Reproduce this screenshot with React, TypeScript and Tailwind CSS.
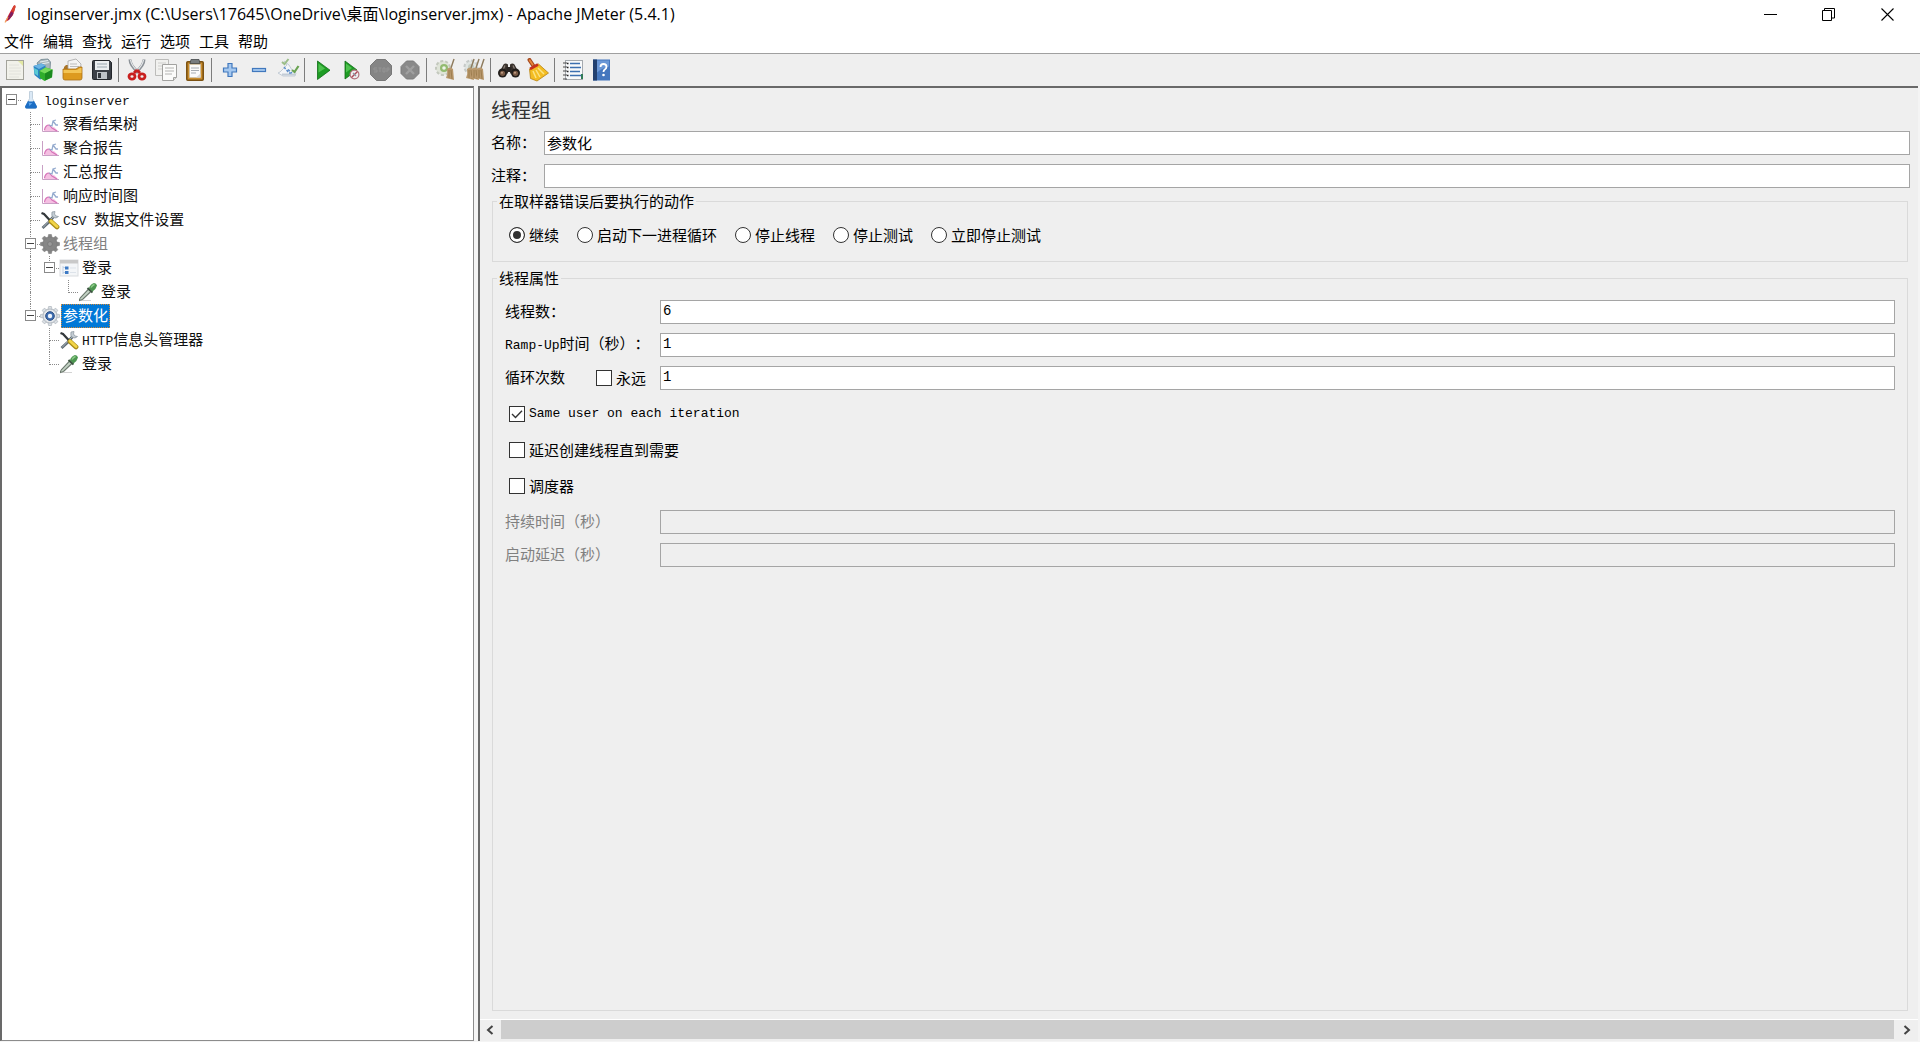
import { useId } from "react";
import type { ReactNode } from "react";

/* ---------- toolbar icons (24 x 24) ---------- */

function Svg({ children, size = 24 }: { children: ReactNode; size?: number }) {
  return (
    <svg width={size} height={size} viewBox={`0 0 ${size} ${size}`} fill="none" aria-hidden="true">
      {children}
    </svg>
  );
}

const NewIcon = () => (
  <Svg>
    <rect x="3.500" y="2.500" width="17" height="19" fill="#f1f1ea" stroke="#a3a39b" />
    <path d="M15 3h5v5z" fill="#e2e8a4" />
    <path d="M6 7h10M6 10h12M6 13h12M6 16h12M6 19h10" stroke="#e2e2dc" />
  </Svg>
);

const TemplatesIcon = () => (
  <Svg>
    <path d="M5 5l4-3.500 7-.5 2.500 3L18 12l-9 3z" fill="#a7b4ba" stroke="#6f858f" strokeWidth=".8" />
    <path d="M8 4l8-1.500M9 6l8-1.500" stroke="#e4ecef" strokeWidth="1.200" />
    <path d="M1.500 8l8-2.500 4 2v12L8 21.500 2.500 17z" fill="#2b82c2" />
    <path d="M1.500 8l8-2.500 4 2L7 11z" fill="#6bb4e4" />
    <path d="M2 10l4 2v6l-3.500-2.500z" fill="#59c9d4" />
    <path d="M7.500 13l6-3.500 7 2-.5 8-7.500 3.500-4.500-3z" fill="#2fae2b" />
    <path d="M7.500 13l6-3.500 7 2-7.500 4z" fill="#75da5a" />
    <path d="M13 15.500v7l7-3.500.5-7.500z" fill="#1b8a1f" />
  </Svg>
);

const OpenIcon = () => (
  <Svg>
    <path d="M3 9l2-2h4l2 2h10v4H3z" fill="#a9752a" />
    <path d="M7 3l8-2 5 5-1 8H7z" fill="#f4f4f4" stroke="#a6a6a6" strokeWidth=".8" />
    <path d="M9 6h7M9 8.500h9" stroke="#bdbdbd" />
    <path d="M2 11h13l3-2h3v11q0 2-2 2H4q-2 0-2-2z" fill="#dd9a1f" stroke="#a8701a" strokeWidth=".8" />
    <path d="M2.500 12H16l3-2h1.500v5h-18z" fill="#f3c455" />
  </Svg>
);

const SaveIcon = () => (
  <Svg>
    <path d="M2.500 3.500q0-1 1-1h16l2 2v16q0 1-1 1h-17q-1 0-1-1z" fill="#3b3f46" stroke="#23262b" />
    <rect x="5" y="3" width="14" height="9" fill="#eceff1" />
    <path d="M7 6h10M7 9h10" stroke="#9aa7b0" />
    <rect x="7" y="14" width="10" height="7" fill="#bfc4c9" />
    <rect x="8" y="15" width="3" height="5" fill="#33373d" />
  </Svg>
);

const CutIcon = () => (
  <Svg>
    <path d="M5 1.500q0 6 8.500 13" stroke="#8c9298" strokeWidth="3" />
    <path d="M5.500 2q1 6 8 12" stroke="#e7eaec" strokeWidth="1.200" />
    <path d="M19 1.500q0 6-8.500 13" stroke="#8c9298" strokeWidth="3" />
    <path d="M18.500 2q-1 6-8 12" stroke="#e7eaec" strokeWidth="1.200" />
    <path d="M12 12l-3 3M12 12l3 3" stroke="#c9201f" strokeWidth="3" />
    <ellipse cx="7" cy="18.500" rx="3" ry="2.600" stroke="#c9201f" strokeWidth="2.800" />
    <ellipse cx="17" cy="18.500" rx="3" ry="2.600" stroke="#c9201f" strokeWidth="2.800" />
  </Svg>
);

const CopyIcon = () => (
  <Svg>
    <path d="M1.500 1.500h13v16h-13z" fill="#f1f1ef" stroke="#bcbcba" />
    <path d="M4 5h8M4 8h8M4 11h5" stroke="#cfcfcd" />
    <path d="M8.500 6.500h14v13l-3 3h-11z" fill="#fbfbfa" stroke="#a2a2a0" />
    <path d="M11 10h9M11 13h9M11 16h7" stroke="#b4b4b2" />
    <path d="M19.500 22.500v-3h3" fill="#dcdcda" stroke="#a2a2a0" />
  </Svg>
);

const PasteIcon = () => (
  <Svg>
    <rect x="3.800" y="3.800" width="16.400" height="18.400" rx="1" fill="#c98d2e" stroke="#7c5212" strokeWidth="1.600" />
    <rect x="6.500" y="6.500" width="11" height="13" fill="#fafafa" stroke="#c9c3b6" strokeWidth=".6" />
    <path d="M8 1.500h8l1 4H7z" fill="#777c7f" stroke="#45494b" strokeWidth=".8" />
    <path d="M8 10h8M8 12.500h8M8 15h5" stroke="#a7acb2" />
    <path d="M13 19.500l4.500-4v4z" fill="#d8d8d8" />
  </Svg>
);

const PlusIcon = () => (
  <Svg>
    <path d="M10 5.500h4V10h4.500v4H14v4.500h-4V14H5.500v-4H10z" fill="#a5c8ef" stroke="#4178bd" strokeWidth="1.200" />
  </Svg>
);

const MinusIcon = () => (
  <Svg>
    <rect x="5.500" y="10.500" width="13" height="3" fill="#a5c8ef" stroke="#4178bd" strokeWidth="1.200" />
  </Svg>
);

const ToggleIcon = () => (
  <Svg>
    <path d="M8 3l3 4-7 7-2 1 5 3h12l1-3-4-3-3-5z" fill="#f3f5f8" stroke="#c3ccd6" />
    <path d="M6 16.500h13" stroke="#c3ccd6" strokeWidth="2" />
    <path d="M8 9l5 6M12 11.500l4 3.500M13 15h3" stroke="#5d8fcb" strokeWidth="1.500" strokeDasharray="2.500 1.500" />
    <path d="M6 4l2.500 2 4-5" stroke="#9bbd88" strokeWidth="2" />
    <path d="M16 12l2.500 2 4-6" stroke="#6aa352" strokeWidth="2.200" />
  </Svg>
);

const StartIcon = () => (
  <Svg>
    <path d="M6.500 3L19 12.200 6.500 21.500z" fill="#1d9c24" stroke="#0f6d15" strokeWidth=".8" />
    <path d="M7.500 5.500L14 10.500l-6.500 4z" fill="#4ec24e" />
  </Svg>
);

const StartNoPauseIcon = () => (
  <Svg>
    <path d="M5 3l12 9L5 21z" fill="#1d9c24" stroke="#0f6d15" strokeWidth=".8" />
    <path d="M6 5.500L12 10l-6 4.500z" fill="#4ec24e" />
    <circle cx="14.500" cy="16.500" r="4.400" fill="#f0edf0" stroke="#b0707a" strokeWidth="1.200" />
    <path d="M11.500 19.500l6-6" stroke="#b04b58" strokeWidth="1.400" />
    <path d="M13 15l3 3" stroke="#8b94a0" strokeWidth="1.200" />
  </Svg>
);

const StopIcon = () => (
  <Svg>
    <path d="M7.500 1.500h9l6 6v9l-6 6h-9l-6-6v-9z" fill="#858585" stroke="#787878" />
    <path d="M5 10h3M5 10v2h3v2H5M9.500 10h3M11 10v4M14 10h2v4h-2zM18 14v-4h2v2h-2" stroke="#949494" />
  </Svg>
);

const ShutdownIcon = () => (
  <Svg>
    <path d="M8.500 3h7l5.500 5.500v7L15.500 21h-7L3 15.500v-7z" fill="#898989" stroke="#7b7b7b" />
    <path d="M8 8l8 8M16 8l-8 8" stroke="#9f9f9f" strokeWidth="2.400" />
  </Svg>
);

const Broom = ({ x }: { x: number }) => (
  <g>
    <path d={`M${x + 7} 1l-3 9`} stroke="#8d7a5c" strokeWidth="1.400" />
    <path d={`M${x} 11q3-3 6 0l1 11-8-2q2-4 1-9z`} fill="#b9986c" />
    <path d={`M${x + 2} 12l0 8M${x + 4} 12l1 9`} stroke="#967648" strokeWidth=".8" />
  </g>
);

const ClearIcon = () => (
  <Svg>
    <circle cx="10" cy="10" r="7" fill="#dfe4d8" stroke="#c3c8bd" strokeDasharray="3 2" strokeWidth="2" />
    <circle cx="11" cy="10" r="4" fill="#93bb70" />
    <circle cx="11" cy="10" r="1.800" fill="#eef3ea" />
    <Broom x={14} />
  </Svg>
);

const ClearAllIcon = () => (
  <Svg>
    <circle cx="9" cy="9" r="6.500" fill="#dfe4e2" stroke="#c6cac8" strokeDasharray="3 2" strokeWidth="2" />
    <circle cx="9" cy="9" r="3" fill="#c3cbc0" />
    <Broom x={5} />
    <Broom x={10} />
    <Broom x={15} />
  </Svg>
);

const SearchIcon = () => (
  <Svg>
    <path d="M2 15L6.500 6.500q2-2 4.500 0v9zM22 15l-4.500-8.500q-2-2-4.500 0v9z" fill="#3a332d" />
    <path d="M9.500 9h5v5h-5z" fill="#2a2522" />
    <path d="M8 7.500l-2 4.500M16 7.500l2 4.500" stroke="#8c8079" strokeWidth="1.200" />
    <circle cx="5.500" cy="15" r="4.500" fill="#211d1a" />
    <circle cx="18.500" cy="15" r="4.500" fill="#211d1a" />
    <circle cx="5.500" cy="15.300" r="2.600" fill="#7a5a45" />
    <circle cx="18.500" cy="15.300" r="2.600" fill="#7a5a45" />
    <circle cx="5" cy="14.700" r="1" fill="#c3a28a" />
    <circle cx="18" cy="14.700" r="1" fill="#c3a28a" />
  </Svg>
);

const ResetSearchIcon = () => (
  <Svg>
    <path d="M3.500 2l4 6" stroke="#a3481f" strokeWidth="4" strokeLinecap="round" />
    <path d="M3.700 2.300l3 4.500" stroke="#e8873a" strokeWidth="1.800" strokeLinecap="round" />
    <path d="M3.500 11l9-5 10 9-11.500 8-6.500-2.500z" fill="#f3bd22" stroke="#b98312" strokeWidth=".8" />
    <path d="M7 13l3 7M10 12l4 7M12 10l6 6" stroke="#fbe383" strokeWidth="1.500" />
    <path d="M4 11l8-4.500" stroke="#c6321d" strokeWidth="2.600" />
  </Svg>
);

const FunctionIcon = () => (
  <Svg>
    <rect x="4.500" y="2.500" width="17" height="19" fill="#f7f9fb" stroke="#a4a9ae" />
    <path d="M9 5.500h10M9 9.500h11M9 13.500h10M9 17.500h11" stroke="#3b6fb0" strokeWidth="1.300" />
    <path d="M2 5h4M2 9h4M2 13h4M2 17h4M2 21h4" stroke="#4b4b4b" strokeWidth="1.200" />
    <path d="M6 5.500h1.500M6 9.500h1.500M6 13.500h1.500M6 17.500h1.500" stroke="#222" strokeWidth="1.600" />
    <path d="M20 16h2v5h-2z" fill="#2f7a55" />
  </Svg>
);

const HelpIcon = () => (
  <Svg>
    <rect x="3" y="1.500" width="17" height="21" fill="#4577be" />
    <rect x="3" y="1.500" width="4" height="21" fill="#22406f" />
    <path d="M7 2.500h12v6q-6 1-12 6z" fill="#6a97d6" />
    <path d="M10.500 9q0-3 3-3t3 2.800q0 1.700-1.700 2.700-1.300.8-1.300 2.500" stroke="#fff" strokeWidth="1.800" />
    <circle cx="13.500" cy="17" r="1.300" fill="#fff" />
  </Svg>
);

/* ---------- tree icons (20 x 20) ---------- */

const FlaskIcon = () => (
  <Svg size={20}>
    <path d="M8.500 1.500h3v7l4 8q.5 2-1.500 2H6q-2 0-1.500-2l4-8z" fill="#dbe9f6" stroke="#b5c6d5" strokeWidth=".8" />
    <path d="M7 11q3 1 6 0l3 5.500q0 2-1.500 2h-9q-1.500 0-1.500-2z" fill="#1c6ec4" />
    <path d="M7.500 12.500q2 .8 4 .3l-3 3.200z" fill="#5ca5ea" />
  </Svg>
);

const GraphIcon = () => (
  <Svg size={20}>
    <path d="M2.500 3v14.500H19" stroke="#c9a0c5" />
    <path d="M4 17q0-5 4-6l3 3 3-1 4 4z" fill="#f5bfe2" />
    <path d="M4.500 16q1-5 4.500-5l3 3 5 3" stroke="#d673b8" strokeWidth="1.200" />
    <path d="M9 11l3 1 1-5 3-1M13 7l3 4h2" stroke="#96accf" strokeWidth="1.300" />
  </Svg>
);

const ToolsIcon = () => (
  <Svg size={20}>
    <path d="M14 6l-5 6-6.500 6" stroke="#5f6b74" strokeWidth="2.800" />
    <path d="M13.500 6.500L3 17.500" stroke="#a9b4bc" />
    <path d="M12 2q-1 4 1.500 5.500t5-1l-2.500-.5-1.500-2 .5-2.500z" fill="#c3ccd3" stroke="#87929b" strokeWidth=".7" />
    <path d="M1.500 3L4 4l6.500 7" stroke="#33383b" strokeWidth="2.200" />
    <path d="M11 11.500l6 5.500" stroke="#a98c17" strokeWidth="4.800" strokeLinecap="round" />
    <path d="M11 11l6 5.500" stroke="#f2d447" strokeWidth="3" strokeLinecap="round" />
  </Svg>
);

const gearTeeth = [0, 45, 90, 135, 180, 225, 270, 315];

const GearIcon = ({ active }: { active?: boolean }) => (
  <Svg size={20}>
    {gearTeeth.map((a) => (
      <path
        key={a}
        d="M7.800 4l.8-3.500h2.800l.8 3.500z"
        transform={`rotate(${a} 10 10)`}
        fill={active ? "#dadfe4" : "#858585"}
        stroke={active ? "#a3abb3" : "#7d7d7d"}
        strokeWidth=".6"
      />
    ))}
    <circle cx="10" cy="10" r="7" fill={active ? "#e3e7eb" : "#868686"} stroke={active ? "#a3abb3" : "#7d7d7d"} strokeWidth=".7" />
    {active ? (
      <>
        <circle cx="10" cy="10" r="4.300" fill="#3f6fb3" stroke="#2b4d82" />
        <circle cx="10" cy="10" r="2.200" fill="#eef4fb" />
      </>
    ) : (
      <circle cx="10" cy="10" r="2.400" fill="#9a9a9a" stroke="#7a7a7a" />
    )}
  </Svg>
);

const ControllerIcon = () => (
  <Svg size={20}>
    <rect x="1" y="2" width="18" height="16" fill="#f4f6f8" stroke="#d9dcdf" />
    <rect x="1" y="2" width="18" height="3.500" fill="#c9c9c9" />
    <path d="M4 8v8M4 9.500h2M4 14.500h2" stroke="#c2d2e6" />
    <rect x="6" y="8.500" width="3.500" height="3" fill="#3d7ac4" />
    <rect x="6" y="13" width="3.500" height="3" fill="#3d7ac4" />
    <path d="M11 10h6M11 14.500h6" stroke="#dde3ea" />
  </Svg>
);

const SamplerIcon = () => (
  <Svg size={20}>
    <path d="M3 18.500h10" stroke="#d3d3d3" />
    <path d="M1.500 18.500q-.2-1.500 1-3l8.500-9 2.500 2.500L5 17q-1.500 1-2 1z" fill="#c4d3c5" stroke="#6b786d" strokeWidth="1.100" />
    <path d="M9.500 6l5 4.500" stroke="#3c5440" strokeWidth="2" />
    <path d="M11 6q1.500-4 5-5 2.500 0 3 2.500-1 4-4.500 6z" fill="#4c9650" />
    <path d="M13 5.500q1.500-2.500 3.500-3" stroke="#8ccb87" strokeWidth="1.400" />
  </Svg>
);

/* ---------- title bar ---------- */

function TitleBar() {
  return (
    <header className="flex h-7 items-center bg-white pr-[3px] pl-1">
      <svg width="14" height="22" viewBox="0 0 14 22" aria-hidden="true">
        <path d="M1 19L5 11 9.500 3q2-2 2 1L9 12l-4 5z" fill="#c8203a" />
        <path d="M9.500 3q2-2 2 1l-1.500 5-2.500-1z" fill="#d8452f" />
        <path d="M7 9l2.500 1L8 13l-3.500 4-.5-2z" fill="#7c2160" />
        <path d="M1 19.500L4 14" stroke="#f2a25a" strokeWidth="1.200" />
      </svg>
      <h1 className="ml-[9px] text-[16px] leading-7 font-normal text-black font-['Open_Sans','Noto_Sans_CJK_SC',sans-serif]">
        loginserver.jmx (C:\Users\17645\OneDrive\桌面\loginserver.jmx) - Apache JMeter (5.4.1)
      </h1>
      <div className="ml-auto flex">
        <button aria-label="最小化" className="flex h-7 w-[58px] items-center justify-center">
          <svg width="13" height="13" viewBox="0 0 13 13"><path d="M0 6.500h13" stroke="#000" /></svg>
        </button>
        <button aria-label="还原" className="flex h-7 w-[58px] items-center justify-center">
          <svg width="13" height="13" viewBox="0 0 13 13" fill="none" stroke="#000">
            <path d="M.5 2.500h9v10h-9zM2.500 2.500v-2h10v9.500h-3" />
          </svg>
        </button>
        <button aria-label="关闭" className="flex h-7 w-[60px] items-center justify-center">
          <svg width="13" height="13" viewBox="0 0 13 13"><path d="M.5.5l12 12M12.500.5l-12 12" stroke="#000" strokeWidth="1.100" /></svg>
        </button>
      </div>
    </header>
  );
}

const menus = ["文件", "编辑", "查找", "运行", "选项", "工具", "帮助"];

const toolGroups: { label: string; icon: ReactNode }[][] = [
  [
    { label: "新建", icon: <NewIcon /> },
    { label: "模板", icon: <TemplatesIcon /> },
    { label: "打开", icon: <OpenIcon /> },
    { label: "保存", icon: <SaveIcon /> },
  ],
  [
    { label: "剪切", icon: <CutIcon /> },
    { label: "复制", icon: <CopyIcon /> },
    { label: "粘贴", icon: <PasteIcon /> },
  ],
  [
    { label: "全部展开", icon: <PlusIcon /> },
    { label: "全部折叠", icon: <MinusIcon /> },
    { label: "切换", icon: <ToggleIcon /> },
  ],
  [
    { label: "启动", icon: <StartIcon /> },
    { label: "不停顿开始", icon: <StartNoPauseIcon /> },
    { label: "停止", icon: <StopIcon /> },
    { label: "关闭线程", icon: <ShutdownIcon /> },
  ],
  [
    { label: "清除", icon: <ClearIcon /> },
    { label: "清除全部", icon: <ClearAllIcon /> },
  ],
  [
    { label: "搜索", icon: <SearchIcon /> },
    { label: "重置搜索", icon: <ResetSearchIcon /> },
  ],
  [
    { label: "函数助手", icon: <FunctionIcon /> },
    { label: "帮助", icon: <HelpIcon /> },
  ],
];

function Toolbar() {
  return (
    <div role="toolbar" className="flex h-[33px] items-center border-t border-[#a0a0a0] bg-[#efefef]">
      {toolGroups.map((group, i) => (
        <div key={i} className="flex items-center">
          {i > 0 && <span className="mr-[3px] ml-[2px] h-6 w-px bg-[#7d7d7d]" />}
          {group.map((t) => (
            <button key={t.label} aria-label={t.label} title={t.label} className="flex h-7 w-[29px] items-center justify-center">
              {t.icon}
            </button>
          ))}
        </div>
      ))}
    </div>
  );
}

/* ---------- test plan tree ---------- */

type Guide = "blank" | "line" | "tee" | "end" | "root";

function GuideCell({ kind, expander }: { kind: Guide; expander: boolean }) {
  const upper = kind === "line" || kind === "tee" || kind === "end";
  const lower = kind === "line" || kind === "tee";
  const across = kind === "tee" || kind === "end" || kind === "root";
  return (
    <span className="relative flex h-6 w-[19px] shrink-0 pl-[9px]">
      <span className="flex flex-1 flex-col">
        <span
          className={`flex-1 border-dotted border-[#8a8a8a] ${upper ? "border-l" : ""} ${across ? "border-b" : ""}`}
        />
        <span className={`flex-1 border-dotted border-[#8a8a8a] ${lower ? "border-l" : ""}`} />
      </span>
      {expander && (
        <button
          aria-label="折叠"
          className="absolute top-[6px] left-[4px] flex h-[11px] w-[11px] items-center justify-center border border-[#8a8a8a] bg-white"
        >
          <span className="h-px w-[7px] bg-[#444]" />
        </button>
      )}
    </span>
  );
}

interface TreeRow {
  guides: Guide[];
  icon: ReactNode;
  latin?: string;
  text?: string;
  expander?: boolean;
  state?: "disabled" | "selected";
}

const rows: TreeRow[] = [
  { guides: ["root"], icon: <FlaskIcon />, latin: "loginserver", expander: true },
  { guides: ["blank", "tee"], icon: <GraphIcon />, text: "察看结果树" },
  { guides: ["blank", "tee"], icon: <GraphIcon />, text: "聚合报告" },
  { guides: ["blank", "tee"], icon: <GraphIcon />, text: "汇总报告" },
  { guides: ["blank", "tee"], icon: <GraphIcon />, text: "响应时间图" },
  { guides: ["blank", "tee"], icon: <ToolsIcon />, latin: "CSV ", text: "数据文件设置" },
  { guides: ["blank", "tee"], icon: <GearIcon />, text: "线程组", expander: true, state: "disabled" },
  { guides: ["blank", "line", "end"], icon: <ControllerIcon />, text: "登录", expander: true },
  { guides: ["blank", "line", "blank", "end"], icon: <SamplerIcon />, text: "登录" },
  { guides: ["blank", "end"], icon: <GearIcon active />, text: "参数化", expander: true, state: "selected" },
  { guides: ["blank", "blank", "tee"], icon: <ToolsIcon />, latin: "HTTP", text: "信息头管理器" },
  { guides: ["blank", "blank", "end"], icon: <SamplerIcon />, text: "登录" },
];

const Latin = ({ children }: { children: ReactNode }) => (
  <span className="font-['Liberation_Mono',monospace] text-[13px] whitespace-pre">{children}</span>
);

function labelStyle(state?: "disabled" | "selected") {
  if (state === "selected") return "outline-1 -outline-offset-1 outline-dotted outline-[#d08a3c] bg-[#0078d7] text-white";
  if (state === "disabled") return "text-[#808080]";
  return "text-[#111]";
}

function Tree() {
  return (
    <nav className="w-[474px] shrink-0 border-t-2 border-r border-b border-l-2 border-[#696969] border-r-[#8c8c8c] border-b-[#8c8c8c] bg-white">
      <ul role="tree">
        {rows.map((r, i) => (
          <li key={i} role="treeitem" aria-selected={r.state === "selected"} className="flex h-6 items-center">
            {r.guides.map((g, j) => (
              <GuideCell key={j} kind={g} expander={!!r.expander && j === r.guides.length - 1} />
            ))}
            <span className="shrink-0">{r.icon}</span>
            <span className={`ml-px h-6 px-0.5 leading-[22px] whitespace-nowrap ${labelStyle(r.state)}`}>
              {r.latin && <Latin>{r.latin}</Latin>}
              {r.text}
            </span>
          </li>
        ))}
      </ul>
    </nav>
  );
}

/* ---------- form ---------- */

const fieldStyle =
  "h-6 w-full min-w-0 border border-[#a5a5a5] bg-white px-0.5 pb-0.5 leading-5 text-black outline-none disabled:bg-[#efefef]";

function TextRow({ label, value = "", wide, disabled, mono, children }: {
  label: ReactNode;
  value?: string;
  wide?: boolean;
  disabled?: boolean;
  mono?: boolean;
  children?: ReactNode;
}) {
  const id = useId();
  return (
    <div className="flex items-center">
      <div className={`flex h-6 shrink-0 items-center ${wide ? "w-[155px]" : "w-[53px]"}`}>
        <label htmlFor={id} className={`leading-[22px] whitespace-nowrap pb-0.5 ${disabled ? "text-[#808080]" : ""}`}>
          {label}
        </label>
        {children}
      </div>
      <input
        id={id}
        type="text"
        defaultValue={value}
        disabled={disabled}
        className={`${fieldStyle} ${mono ? "text-[14px] font-['Liberation_Mono',monospace]" : "text-[15px]"}`}
      />
    </div>
  );
}

function Check({ label, checked }: { label: ReactNode; checked?: boolean }) {
  return (
    <label className="flex h-6 items-center gap-1 leading-6 whitespace-nowrap">
      <span className="relative flex">
        <input
          type="checkbox"
          defaultChecked={checked}
          className="peer h-4 w-4 appearance-none border border-[#333] bg-white"
        />
        <svg
          width="16"
          height="16"
          viewBox="0 0 16 16"
          fill="none"
          className="pointer-events-none absolute inset-0 hidden peer-checked:block"
        >
          <path d="M3 8l3.500 3.500L13 4.800" stroke="#333" strokeWidth="1.400" />
        </svg>
      </span>
      {label}
    </label>
  );
}

const actions = ["继续", "启动下一进程循环", "停止线程", "停止测试", "立即停止测试"];

function ThreadGroupPanel() {
  return (
    <main className="flex min-w-0 flex-1 flex-col border-t-2 border-l-2 border-[#696969] bg-[#efefef]">
      <form className="flex flex-1 flex-col pt-[7px] pr-2 pb-2 pl-[11px]">
        <h2 className="text-[20px] leading-[30px] text-[#333]">线程组</h2>
        <div className="mt-[6px] flex flex-col gap-[9px]">
          <TextRow label="名称：" value="参数化" />
          <TextRow label="注释：" />
        </div>

        <fieldset className="mt-[3px] mr-0.5 ml-px border border-[#dadada]">
          <legend className="ml-1 px-0.5 leading-5">在取样器错误后要执行的动作</legend>
          <div className="mt-3 mb-[14px] flex h-6 items-center gap-[18px] pl-4">
            {actions.map((a, i) => (
              <label key={a} className="flex items-center gap-1 leading-6 whitespace-nowrap">
                <input
                  type="radio"
                  name="on-error"
                  defaultChecked={i === 0}
                  className="h-4 w-4 appearance-none rounded-full border border-[#333] bg-white checked:bg-[#333] checked:shadow-[inset_0_0_0_3px_white]"
                />
                {a}
              </label>
            ))}
          </div>
        </fieldset>

        <fieldset className="mt-[6px] mr-0.5 ml-px flex-1 border border-[#dadada]">
          <legend className="ml-1 px-0.5 leading-5">线程属性</legend>
          <div className="mt-3 flex flex-col gap-3 px-3">
            <div className="flex flex-col gap-[9px]">
              <TextRow wide mono label="线程数：" value="6" />
              <TextRow wide mono label={<><Latin>Ramp-Up</Latin>时间（秒）：</>} value="1" />
              <TextRow wide mono label="循环次数" value="1">
                <span className="mr-[14px] ml-auto">
                  <Check label="永远" />
                </span>
              </TextRow>
            </div>
            <div className="flex flex-col items-start gap-3 pl-1">
              <Check checked label={<Latin>Same user on each iteration</Latin>} />
              <Check label="延迟创建线程直到需要" />
              <Check label="调度器" />
            </div>
            <div className="flex flex-col gap-[9px]">
              <TextRow wide disabled label="持续时间（秒）" />
              <TextRow wide disabled label="启动延迟（秒）" />
            </div>
          </div>
        </fieldset>
      </form>

      <div className="flex h-[22px] border-t border-white pb-0.5">
        <button aria-label="向左滚动" className="flex w-[21px] items-center justify-center pr-0.5">
          <svg width="8" height="10" viewBox="0 0 8 10" fill="none"><path d="M6.500 1L2 5l4.500 4" stroke="#444" strokeWidth="2" /></svg>
        </button>
        <div className="flex-1 bg-[#cdcdcd]" />
        <button aria-label="向右滚动" className="flex w-6 items-center justify-center pl-0.5">
          <svg width="8" height="10" viewBox="0 0 8 10" fill="none"><path d="M1.500 1L6 5 1.500 9" stroke="#444" strokeWidth="2" /></svg>
        </button>
      </div>
    </main>
  );
}

export default function App() {
  return (
    <div className="flex min-h-screen flex-col bg-[#f4f4f4] text-[15px] text-black font-['Noto_Sans_CJK_SC',sans-serif] [text-spacing-trim:space-all]">
      <TitleBar />
      <div role="menubar" className="flex h-[25px] items-center gap-[9px] bg-white pl-1">
        {menus.map((m) => (
          <button key={m} role="menuitem" className="leading-6">
            {m}
          </button>
        ))}
      </div>
      <Toolbar />
      <div className="flex flex-1 gap-1 pr-0.5 pb-px">
        <Tree />
        <ThreadGroupPanel />
      </div>
    </div>
  );
}
